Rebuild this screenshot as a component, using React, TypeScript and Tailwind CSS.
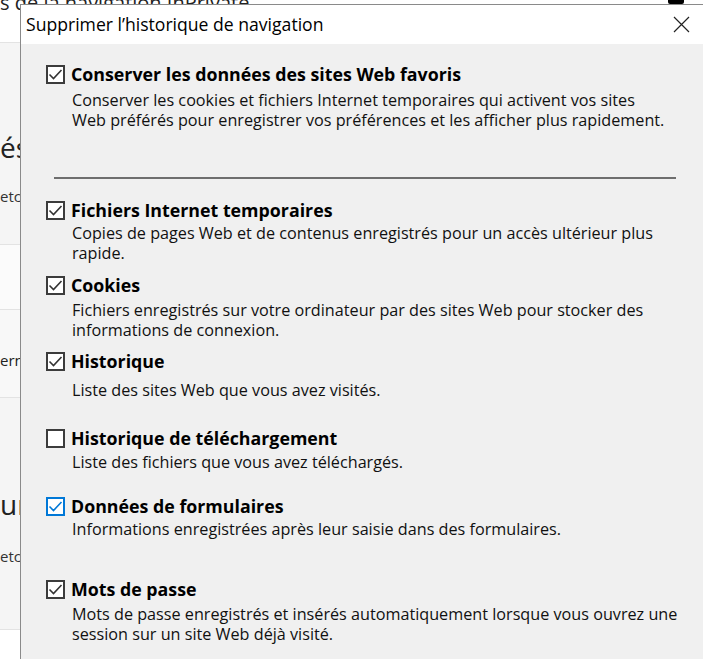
import React from 'react';

type Item = {
  title: string;
  desc: string[];
  checked: boolean;
  focused?: boolean;
  mt: string;
  gap: string;
};

const items: Item[] = [
  {
    title: 'Fichiers Internet temporaires',
    desc: ['Copies de pages Web et de contenus enregistrés pour un accès ultérieur plus', 'rapide.'],
    checked: true,
    mt: 'mt-[21px]',
    gap: 'mt-[3px]',
  },
  {
    title: 'Cookies',
    desc: ['Fichiers enregistrés sur votre ordinateur par des sites Web pour stocker des', 'informations de connexion.'],
    checked: true,
    mt: 'mt-[12px]',
    gap: 'mt-[5px]',
  },
  {
    title: 'Historique',
    desc: ['Liste des sites Web que vous avez visités.'],
    checked: true,
    mt: 'mt-[11px]',
    gap: 'mt-[9px]',
  },
  {
    title: 'Historique de téléchargement',
    desc: ['Liste des fichiers que vous avez téléchargés.'],
    checked: false,
    mt: 'mt-[28px]',
    gap: 'mt-[4px]',
  },
  {
    title: 'Données de formulaires',
    desc: ['Informations enregistrées après leur saisie dans des formulaires.'],
    checked: true,
    focused: true,
    mt: 'mt-[24px]',
    gap: 'mt-[3px]',
  },
  {
    title: 'Mots de passe',
    desc: ['Mots de passe enregistrés et insérés automatiquement lorsque vous ouvrez une', 'session sur un site Web déjà visité.'],
    checked: true,
    mt: 'mt-[40px]',
    gap: 'mt-[5px]',
  },
];

const CheckBox: React.FC<{ checked: boolean; focused?: boolean }> = ({ checked, focused }) => (
  <div
    className={`w-[19px] h-[19px] shrink-0 bg-white border-2 flex items-center justify-center ${
      focused ? 'border-[#0078d7]' : 'border-[#3c3c3c]'
    }`}
  >
    {checked && (
      <svg width="15" height="15" viewBox="0 0 15 15" fill="none">
        <path
          d="M1.5 7.5 L5.5 11.5 L13.5 3"
          stroke={focused ? '#0078d7' : '#333333'}
          strokeWidth="1.6"
        />
      </svg>
    )}
  </div>
);

const Option: React.FC<{ item: Item }> = ({ item }) => (
  <div className={item.mt}>
    <div className="h-[20px] flex items-center">
      <CheckBox checked={item.checked} focused={item.focused} />
      <span className="ml-[6px] font-bold text-[17.8px] leading-[20px] text-black whitespace-nowrap">{item.title}</span>
    </div>
    <div className={`${item.gap} pl-[26px] text-[16.2px] leading-[20px] text-[#111]`}>
      {item.desc.map((line) => (
        <div key={line} className="whitespace-nowrap">
          {line}
        </div>
      ))}
    </div>
  </div>
);

export default function App() {
  return (
    <div className="relative w-[703px] h-[659px] overflow-hidden bg-white font-['Open_Sans',sans-serif]">
      {/* page behind the dialog */}
      <div className="flex flex-col text-[#222]">
        <div className="h-[43px] bg-white border-b border-[#e3e3e3] overflow-hidden">
          <div className="-mt-[11px] text-[20px] leading-[28px] whitespace-nowrap">s de la navigation InPrivate</div>
        </div>
        <div className="h-[202px] bg-[#f5f5f5] border-b border-[#e3e3e3] flex flex-col">
          <div className="mt-[86px] text-[28px] leading-[36px] whitespace-nowrap">és</div>
          <div className="mt-[21px] text-[15px] leading-[20px] text-[#333] whitespace-nowrap">etc</div>
        </div>
        <div className="h-[65px] bg-[#fbfbfb] border-b border-[#e3e3e3]" />
        <div className="h-[88px] bg-[#f8f8f8] border-b border-[#e3e3e3] flex flex-col">
          <div className="mt-[40px] text-[15px] leading-[20px] whitespace-nowrap">ern</div>
        </div>
        <div className="h-[232px] bg-[#f5f5f5] border-b border-[#e3e3e3] flex flex-col">
          <div className="mt-[88px] text-[28px] leading-[36px] whitespace-nowrap">ur</div>
          <div className="mt-[24px] text-[15px] leading-[20px] text-[#333] whitespace-nowrap">etc</div>
        </div>
        <div className="flex-1 bg-[#fbfbfb]" />
      </div>

      {/* dialog */}
      <div className="absolute left-[20px] top-[4px] right-0 bottom-0 flex flex-col border-l border-t border-[#8a8a8a] bg-[#f0f0f0]">
        <div className="h-[39px] bg-white flex items-center justify-between pl-[5px] pr-[13px]">
          <span className="text-[17.6px] text-black whitespace-nowrap">Supprimer l’historique de navigation</span>
          <svg width="17" height="17" viewBox="0 0 17 17" fill="none">
            <path d="M1 1 L16 16 M16 1 L1 16" stroke="#222" strokeWidth="1.2" />
          </svg>
        </div>
        <div className="flex flex-col pl-[25px]">
          <div className="mt-[20px]">
            <div className="h-[20px] flex items-center">
              <CheckBox checked />
              <span className="ml-[6px] font-bold text-[17.8px] leading-[20px] text-black whitespace-nowrap">
                Conserver les données des sites Web favoris
              </span>
            </div>
            <div className="mt-[6px] pl-[26px] text-[16.2px] leading-[20px] text-[#111]">
              <div className="whitespace-nowrap">Conserver les cookies et fichiers Internet temporaires qui activent vos sites</div>
              <div className="whitespace-nowrap">Web préférés pour enregistrer vos préférences et les afficher plus rapidement.</div>
            </div>
          </div>
          <div className="mt-[47px] ml-[8px] w-[622px] h-[2px] bg-[#6e6e6e]" />
          {items.map((item) => (
            <Option key={item.title} item={item} />
          ))}
        </div>
      </div>
      <div className="absolute left-[668px] top-0 w-[16px] h-[4px] bg-black rounded-b-[2px]" />
    </div>
  );
}
